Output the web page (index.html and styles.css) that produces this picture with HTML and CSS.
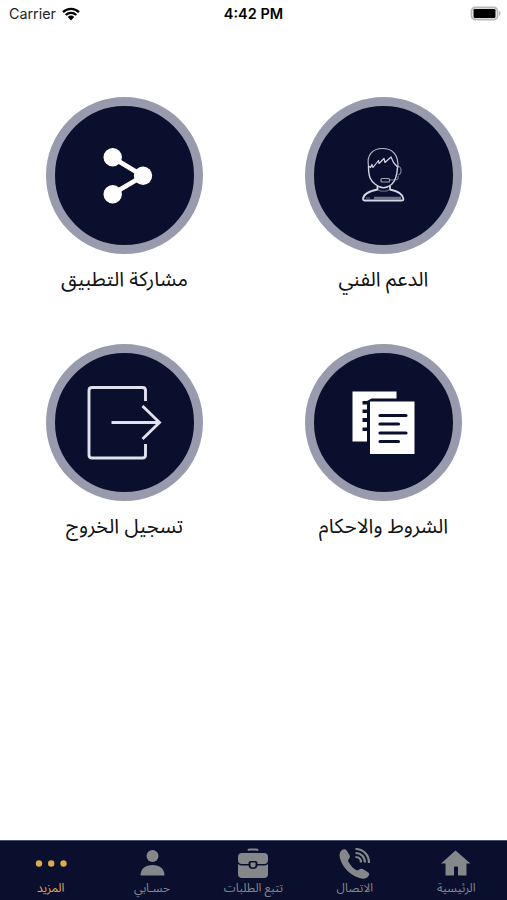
FILE: index.html
```html
<!DOCTYPE html>
<html lang="ar" dir="rtl">
<head>
    <meta charset="UTF-8">
    <meta name="viewport" content="width=device-width, initial-scale=1.0">
    <title>المزيد</title>
    <link rel="stylesheet" href="styles.css">
</head>
<body>

    <div class="screen">
      <header class="status-bar" dir="ltr">
        <div class="carrier">
          <span>Carrier</span>
          <svg class="wifi" viewBox="0 0 18 14" width="18" height="14">
            <path d="M1 5.2a11.5 11.5 0 0 1 16 0M3.7 8a7.6 7.6 0 0 1 10.6 0" fill="none" stroke="#000" stroke-width="2.3"/>
            <path d="M5.8 10.1a4.7 4.7 0 0 1 6.4 0L9 13.4z"/>
          </svg>
        </div>
        <div class="time">4:42 PM</div>
        <svg class="battery" viewBox="0 0 31 15" width="31" height="15">
          <rect x="1.500" y="1.500" width="26" height="12" rx="3.5" fill="#fff" stroke="#b8b8b8" stroke-width="1.800"/>
          <rect x="3.500" y="3" width="22" height="9" rx="1.2"/>
          <path d="M29 5c2 1 2 4 0 5z" fill="#b5b5b5"/>
        </svg>
      </header>

      <main class="menu">
        <a class="menu-item">
          <span class="circle">
            <svg viewBox="0 0 139 139" width="139" height="139" fill="none" stroke="#d3d7e4" stroke-width="1.2" stroke-linejoin="round">
              <path d="M54.500 60c-2-11 4-17.500 14-17.500 10 0 16 6 15.500 19" opacity=".85"/>
              <path d="M54.500 60c0 11 2 15 7 18.500 5 4 11 4 16 0 4-3.500 5.500-8 6-17" stroke-width="1.4"/>
              <path d="M54.500 60l2 1.500 1.500-3 1 3 5.500-7 .5 3 5-5 1 4 6-5.500 2.500 5.500 4.500 5"/>
              <path d="M84 60.500c4 0 4 8 0 8.500M84 70c1 3-1 4-4 4h-4" opacity=".55"/>
              <rect x="67" y="72.500" width="8.500" height="3.500" rx="1" opacity=".75"/>
              <path d="M63.500 80v3.500c-8 1.500-14 4-14.500 9.500 0 1 .5 1.500 1.500 1.500h37.500c1 0 1.500-.5 1.500-1.500-.5-5.500-6-8-13.500-9.500V80" stroke-width="1.800"/>
              <path d="M64 84c3 1.500 8 1.500 11 0M52 92h4" opacity=".5"/>
              <path d="M60 92h27" stroke-width="2.500" opacity=".5"/>
            </svg>
          </span>
          <span class="label">الدعم الفني</span>
        </a>
        <a class="menu-item">
          <span class="circle">
            <svg viewBox="0 0 139 139" width="139" height="139" fill="#fff">
              <path d="M57.500 51.500L88 70 57.500 88" fill="none" stroke="#fff" stroke-width="4.800"/>
              <circle cx="57.700" cy="51.300" r="9.200"/>
              <circle cx="88" cy="69.700" r="9.200"/>
              <circle cx="57.700" cy="88.300" r="9.200"/>
            </svg>
          </span>
          <span class="label">مشاركة التطبيق</span>
        </a>
        <a class="menu-item">
          <span class="circle">
            <svg viewBox="0 0 139 139" width="139" height="139">
              <path d="M38.500 38.500H82.500V45.500H57.500L53 48H48.500V51.500H53V56.500H48.500V60H53V65H48.500V69H53V74.500H48.500V78H53V88.500H38.500z" fill="#fff"/>
              <path d="M56 48.500H100.500V101H56z" fill="#fff"/>
              <path d="M66 62.500H92M66 71H84.500M66 80H92M66 88.500H84.500" stroke="#090f2c" stroke-width="3.200" stroke-linecap="round"/>
            </svg>
          </span>
          <span class="label">الشروط والاحكام</span>
        </a>
        <a class="menu-item">
          <span class="circle">
            <svg viewBox="0 0 139 139" width="139" height="139" fill="none" stroke="#e0e1ec" stroke-width="2.900">
              <path d="M90.500 48V37.500q0-3-3-3H37q-3 0-3 3V102q0 3 3 3H87.500q3 0 3-3V91"/>
              <path d="M56.500 69.500H104M87.500 53L104.500 69.500 87.500 86"/>
            </svg>
          </span>
          <span class="label">تسجيل الخروج</span>
        </a>
      </main>

      <nav class="tab-bar">
        <a class="tab">
          <svg viewBox="0 0 34 34" width="34" height="34" fill="currentColor">
            <path d="M16.500 4.500L31.500 17.500H27.500V29.500H19V21.500Q19 20.500 18 20.500H16Q15 20.500 15 21.500V29.500H6.500V17.500H2z"/>
          </svg>
          <span>الرئيسية</span>
        </a>
        <a class="tab">
          <svg viewBox="0 0 34 34" width="34" height="34" fill="currentColor">
            <path d="M4 4c2-1.500 4-1 5 1l2.500 4c1 2 0 3-1 4.500-1 1 0 2.500 1 4 1.500 2.500 4 5 6.500 6.500 1.500 1 2.500 0 4-1 1.500-.7 2.500-.2 4 .7l4 2.600c1.500 1 1.500 2.500.5 3.700-2 3-5 3.300-9 2C12 29 5 22 2 12.500 1 8.500 1.500 6 4 4z"/>
            <path d="M17.500 3c8 0 13.500 6 13.500 14M17.500 7c5.500 0 9.500 4 9.500 9.500M17.500 11c3.500 0 5.500 2 5.500 5.500" fill="none" stroke="currentColor" stroke-width="2.200"/>
          </svg>
          <span>الاتصال</span>
        </a>
        <a class="tab">
          <svg viewBox="0 0 34 34" width="34" height="34" fill="currentColor">
            <path d="M12 4.500Q12.500 3.500 14 3.500H20Q21.500 3.500 22 4.500" fill="none" stroke="currentColor" stroke-width="1.800"/>
            <path d="M6 7H28q4 0 4 4v3q0 4-4 4H21.500v-1q0-2-2-2h-5q-2 0-2 2v1H6q-4 0-4-4v-3q0-4 4-4z"/>
            <path d="M2 18q2 1.500 4 1.500H12.500q.5 3.500 4.500 3.500t4.500-3.500H28q2 0 4-1.500V28q0 4-4 4H6q-4 0-4-4z"/>
            <path d="M14.500 16.500h5v3q0 2-2.500 2t-2.500-2z"/>
          </svg>
          <span>تتبع الطلبات</span>
        </a>
        <a class="tab">
          <svg viewBox="0 0 34 34" width="34" height="34" fill="currentColor">
            <circle cx="17.500" cy="10" r="6"/>
            <path d="M5.500 29.500c0-7 5-10.500 12-10.500s12 3.500 12 10.500z"/>
          </svg>
          <span>حسـابي</span>
        </a>
        <a class="tab active">
          <svg viewBox="0 0 34 34" width="34" height="34" fill="currentColor">
            <circle cx="5" cy="17.500" r="3.200"/>
            <circle cx="17.200" cy="17.500" r="3.200"/>
            <circle cx="29.500" cy="17.500" r="3.200"/>
          </svg>
          <span>المزيد</span>
        </a>
      </nav>
    </div>

</body>
</html>
```
FILE: styles.css
```css
* {
  box-sizing: border-box;
}

body {
  margin: 0;
  background-color: #fff;
  color: #111;
  font-family: "Noto Sans Arabic", "DejaVu Sans Condensed", sans-serif;
  font-family: "Noto Sans Arabic", "Noto Sans", "DejaVu Sans", sans-serif;
}

.screen {
  display: flex;
  flex-direction: column;
  height: 900px;
}

/* Status bar */
.status-bar {
  display: grid;
  grid-template-columns: 1fr auto 1fr;
  align-items: center;
  height: 27px;
  padding: 0 6px 0 9px;
  font-family: Inter, sans-serif;
  font-size: 14.3px;
  color: #222;
}

.carrier {
  display: flex;
  align-items: center;
  gap: 6px;
}

.time {
  margin-right: 3px;
  color: #000;
  font-size: 14.5px;
  font-weight: 600;
}

.battery {
  justify-self: end;
}

/* Menu circles */
.menu {
  flex: 1;
  display: grid;
  grid-template-columns: 157px 157px;
  grid-auto-rows: 247px;
  justify-content: space-between;
  padding: 70px 45px 0 46px;
}

.menu-item {
  display: flex;
  flex-direction: column;
  align-items: center;
}

.circle {
  width: 157px;
  height: 157px;
  border: 9px solid #989bad;
  border-radius: 50%;
  background-color: #090f2c;
}

.circle svg {
  display: block;
}

.label {
  margin-top: 7px;
  font-size: 20.3px;
  line-height: 37px;
  white-space: nowrap;
}

/* Bottom tabs */
.tab-bar {
  display: flex;
  height: 60px;
  border-top: 1px solid #4b5067;
  background-color: #090f2c;
  color: #85888b;
}

.tab {
  flex: 1;
  display: flex;
  flex-direction: column;
  align-items: center;
  padding-top: 5px;
  font-size: 12px;
  line-height: 18px;
  white-space: nowrap;
}

.tab.active {
  color: #e0a94a;
}
```
